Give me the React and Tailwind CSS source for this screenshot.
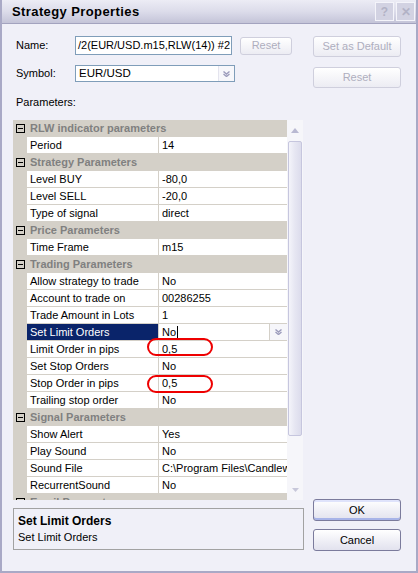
import React from "react";

const F = "font-['Liberation_Sans',Arial,sans-serif]";

function MinusBox() {
  return (
    <div className="flex h-[9px] w-[9px] items-center justify-center border border-black">
      <div className="h-px w-[5px] bg-black" />
    </div>
  );
}

function Header({ label }) {
  return (
    <div className="flex h-[17px] shrink-0 items-center bg-[#d4d0c8]">
      <div className="flex w-[14px] shrink-0 justify-center pl-px">
        <MinusBox />
      </div>
      <span className="pl-[3px] font-bold text-[#808080] whitespace-nowrap">{label}</span>
    </div>
  );
}

function Row({ name, value, circle, circleTop }) {
  return (
    <div className="flex h-[17px] shrink-0">
      <div className="w-[14px] shrink-0 bg-[#d4d0c8]" />
      <div className="w-[132px] shrink-0 overflow-hidden whitespace-nowrap border-r border-b border-[#d4d0c8] bg-white pl-[3px] leading-[16px]">
        {name}
      </div>
      <div className="relative min-w-0 flex-1 whitespace-nowrap border-b border-[#d4d0c8] bg-white pl-[3px] leading-[16px]">
        <div className="overflow-hidden">{value}</div>
        {circle && (
          <span
            className={
              "absolute left-[-12px] z-10 h-[18px] w-[66px] rounded-[9px] border-2 border-[#ee0000] " +
              (circleTop === 0 ? "top-0" : "top-[-3px]")
            }
          />
        )}
      </div>
    </div>
  );
}

function Chevron({ color = "#9c9cbc" }) {
  return (
    <svg width="7" height="6" viewBox="0 0 7 6">
      <path d="M0.5 0.5 L3.5 3 L6.5 0.5" fill="none" stroke={color} strokeWidth="1.4" />
      <path d="M0.5 3 L3.5 5.5 L6.5 3" fill="none" stroke={color} strokeWidth="1.4" />
    </svg>
  );
}

function SelectedRow() {
  return (
    <div className="flex h-[17px] shrink-0">
      <div className="w-[14px] shrink-0 bg-[#d4d0c8]" />
      <div className="w-[132px] shrink-0 whitespace-nowrap border-r border-b border-[#d4d0c8] bg-[#0a246a] pl-[3px] leading-[16px] text-white">
        Set Limit Orders
      </div>
      <div className="flex min-w-0 flex-1 border-b border-[#d4d0c8] bg-white">
        <div className="flex flex-1 items-center border-r border-[#d4d0c8] pl-[3px] leading-[16px]">
          No<span className="ml-px inline-block h-[13px] w-px bg-black" />
        </div>
        <div className="flex w-[17px] items-center justify-center bg-[#f6f6fa]">
          <Chevron />
        </div>
      </div>
    </div>
  );
}

function DisabledBtn({ w, h, children }) {
  return (
    <div
      className={
        "flex items-center justify-center rounded-[3px] border border-[#cfcfdd] bg-gradient-to-b from-white to-[#ececf3] text-[#aeaebe] " +
        w +
        " " +
        h
      }
    >
      {children}
    </div>
  );
}

function ActiveBtn({ children, def }) {
  return (
    <div
      className={
        "flex h-[22px] w-[88px] items-center justify-center rounded-[3px] border border-[#7b7b9c] bg-gradient-to-b from-white to-[#e2e2ee] text-black " +
        (def ? "shadow-[inset_0_-2px_0_#a8b4e8,inset_0_2px_0_#dfe3fb]" : "")
      }
    >
      {children}
    </div>
  );
}

export default function App() {
  return (
    <div
      className={
        "flex h-[573px] w-[418px] flex-col overflow-hidden border-x-2 border-b-2 border-[#a9a9c6] bg-[#f0f0f8] text-[11px] text-black " +
        F
      }
    >
      {/* Title bar */}
      <div className="flex h-[24px] shrink-0 items-center justify-between border-b border-[#a3a3bf] bg-gradient-to-b from-[#ececf5] via-[#dcdcea] to-[#c4c4d8] pl-[10px] pr-px">
        <span className="text-[13px] font-bold tracking-[0.4px] text-black">Strategy Properties</span>
        <div className="flex gap-[2px]">
          <div className="flex h-[19px] w-[19px] items-center justify-center border border-[#f4f4fa] bg-[#d2d2e2] text-[12px] font-bold text-[#b2b2c6]">
            ?
          </div>
          <div className="flex h-[19px] w-[19px] items-center justify-center border border-[#f4f4fa] bg-[#d2d2e2] text-[12px] font-bold text-[#b2b2c6]">
            ✕
          </div>
        </div>
      </div>

      {/* Body */}
      <div className="flex gap-[9px] pl-[11px]">
        {/* Left column */}
        <div className="flex w-[291px] flex-col">
          <div className="mt-[12px] flex h-[19px] items-center">
            <span className="w-[62px] shrink-0 pl-[3px]">Name:</span>
            <div className="flex h-[19px] w-[157px] shrink-0 items-center overflow-hidden whitespace-nowrap border border-[#7f9db9] bg-white pl-[2px] text-[11px]">
              /2(EUR/USD.m15,RLW(14)) #2
            </div>
            <div className="ml-[8px]">
              <DisabledBtn w="w-[52px]" h="h-[18px]">Reset</DisabledBtn>
            </div>
          </div>
          <div className="mt-[10px] flex h-[17px] items-center">
            <span className="w-[62px] shrink-0 pl-[3px]">Symbol:</span>
            <div className="flex h-[17px] w-[160px] items-center border border-[#7f9db9] bg-white">
              <span className="flex-1 pl-[3px] text-[11.5px]">EUR/USD</span>
              <div className="flex h-full w-[16px] items-center justify-center border-l border-[#e4e4ee] bg-[#f7f7fb]">
                <Chevron />
              </div>
            </div>
          </div>
          <div className="mt-[13px] h-[14px] pl-[3px] leading-[14px]">Parameters:</div>

          {/* Grid */}
          <div className="mt-[11px] flex h-[380px] w-[290px] overflow-hidden">
            <div className="flex w-[274px] shrink-0 flex-col">
              <Header label="RLW indicator parameters" />
              <Row name="Period" value="14" />
              <Header label="Strategy Parameters" />
              <Row name="Level BUY" value="-80,0" />
              <Row name="Level SELL" value="-20,0" />
              <Row name="Type of signal" value="direct" />
              <Header label="Price Parameters" />
              <Row name="Time Frame" value="m15" />
              <Header label="Trading Parameters" />
              <Row name="Allow strategy to trade" value="No" />
              <Row name="Account to trade on" value="00286255" />
              <Row name="Trade Amount in Lots" value="1" />
              <SelectedRow />
              <Row name="Limit Order in pips" value="0,5" circle circleTop={-3} />
              <Row name="Set Stop Orders" value="No" />
              <Row name="Stop Order in pips" value="0,5" circle circleTop={0} />
              <Row name="Trailing stop order" value="No" />
              <Header label="Signal Parameters" />
              <Row name="Show Alert" value="Yes" />
              <Row name="Play Sound" value="No" />
              <Row name="Sound File" value="C:\Program Files\Candlew" />
              <Row name="RecurrentSound" value="No" />
              <Header label="Email Parameters" />
            </div>
            {/* Scrollbar */}
            <div className="flex w-[16px] shrink-0 flex-col bg-[#f6f6fa]">
              <div className="flex h-[21px] items-center justify-center">
                <svg width="8" height="5" viewBox="0 0 8 5">
                  <path d="M0 5 L4 0 L8 5 Z" fill="#b9b9d2" />
                </svg>
              </div>
              <div className="mx-px h-[295px] rounded-[2px] border border-[#c6c6de] bg-gradient-to-r from-[#f4f4fa] via-[#e6e6f2] to-[#dcdcec]" />
              <div className="flex flex-1 items-end justify-center pb-[8px]">
                <svg width="7" height="4" viewBox="0 0 7 4">
                  <path d="M0 0 L3.5 4 L7 0 Z" fill="#c8c8da" />
                </svg>
              </div>
            </div>
          </div>

          {/* Description */}
          <div className="mt-[8px] flex h-[42px] w-[291px] flex-col justify-center border border-[#a2a2a2] pl-[4px]">
            <span className="text-[12px] font-bold leading-[15px]">Set Limit Orders</span>
            <span className="leading-[16px]">Set Limit Orders</span>
          </div>
        </div>

        {/* Right column */}
        <div className="flex w-[88px] flex-col">
          <div className="mt-[12px]">
            <DisabledBtn w="w-[88px]" h="h-[21px]">Set as Default</DisabledBtn>
          </div>
          <div className="mt-[10px]">
            <DisabledBtn w="w-[88px]" h="h-[21px]">Reset</DisabledBtn>
          </div>
          <div className="mt-[411px]">
            <ActiveBtn def>OK</ActiveBtn>
          </div>
          <div className="mt-[8px]">
            <ActiveBtn>Cancel</ActiveBtn>
          </div>
        </div>
      </div>
    </div>
  );
}
